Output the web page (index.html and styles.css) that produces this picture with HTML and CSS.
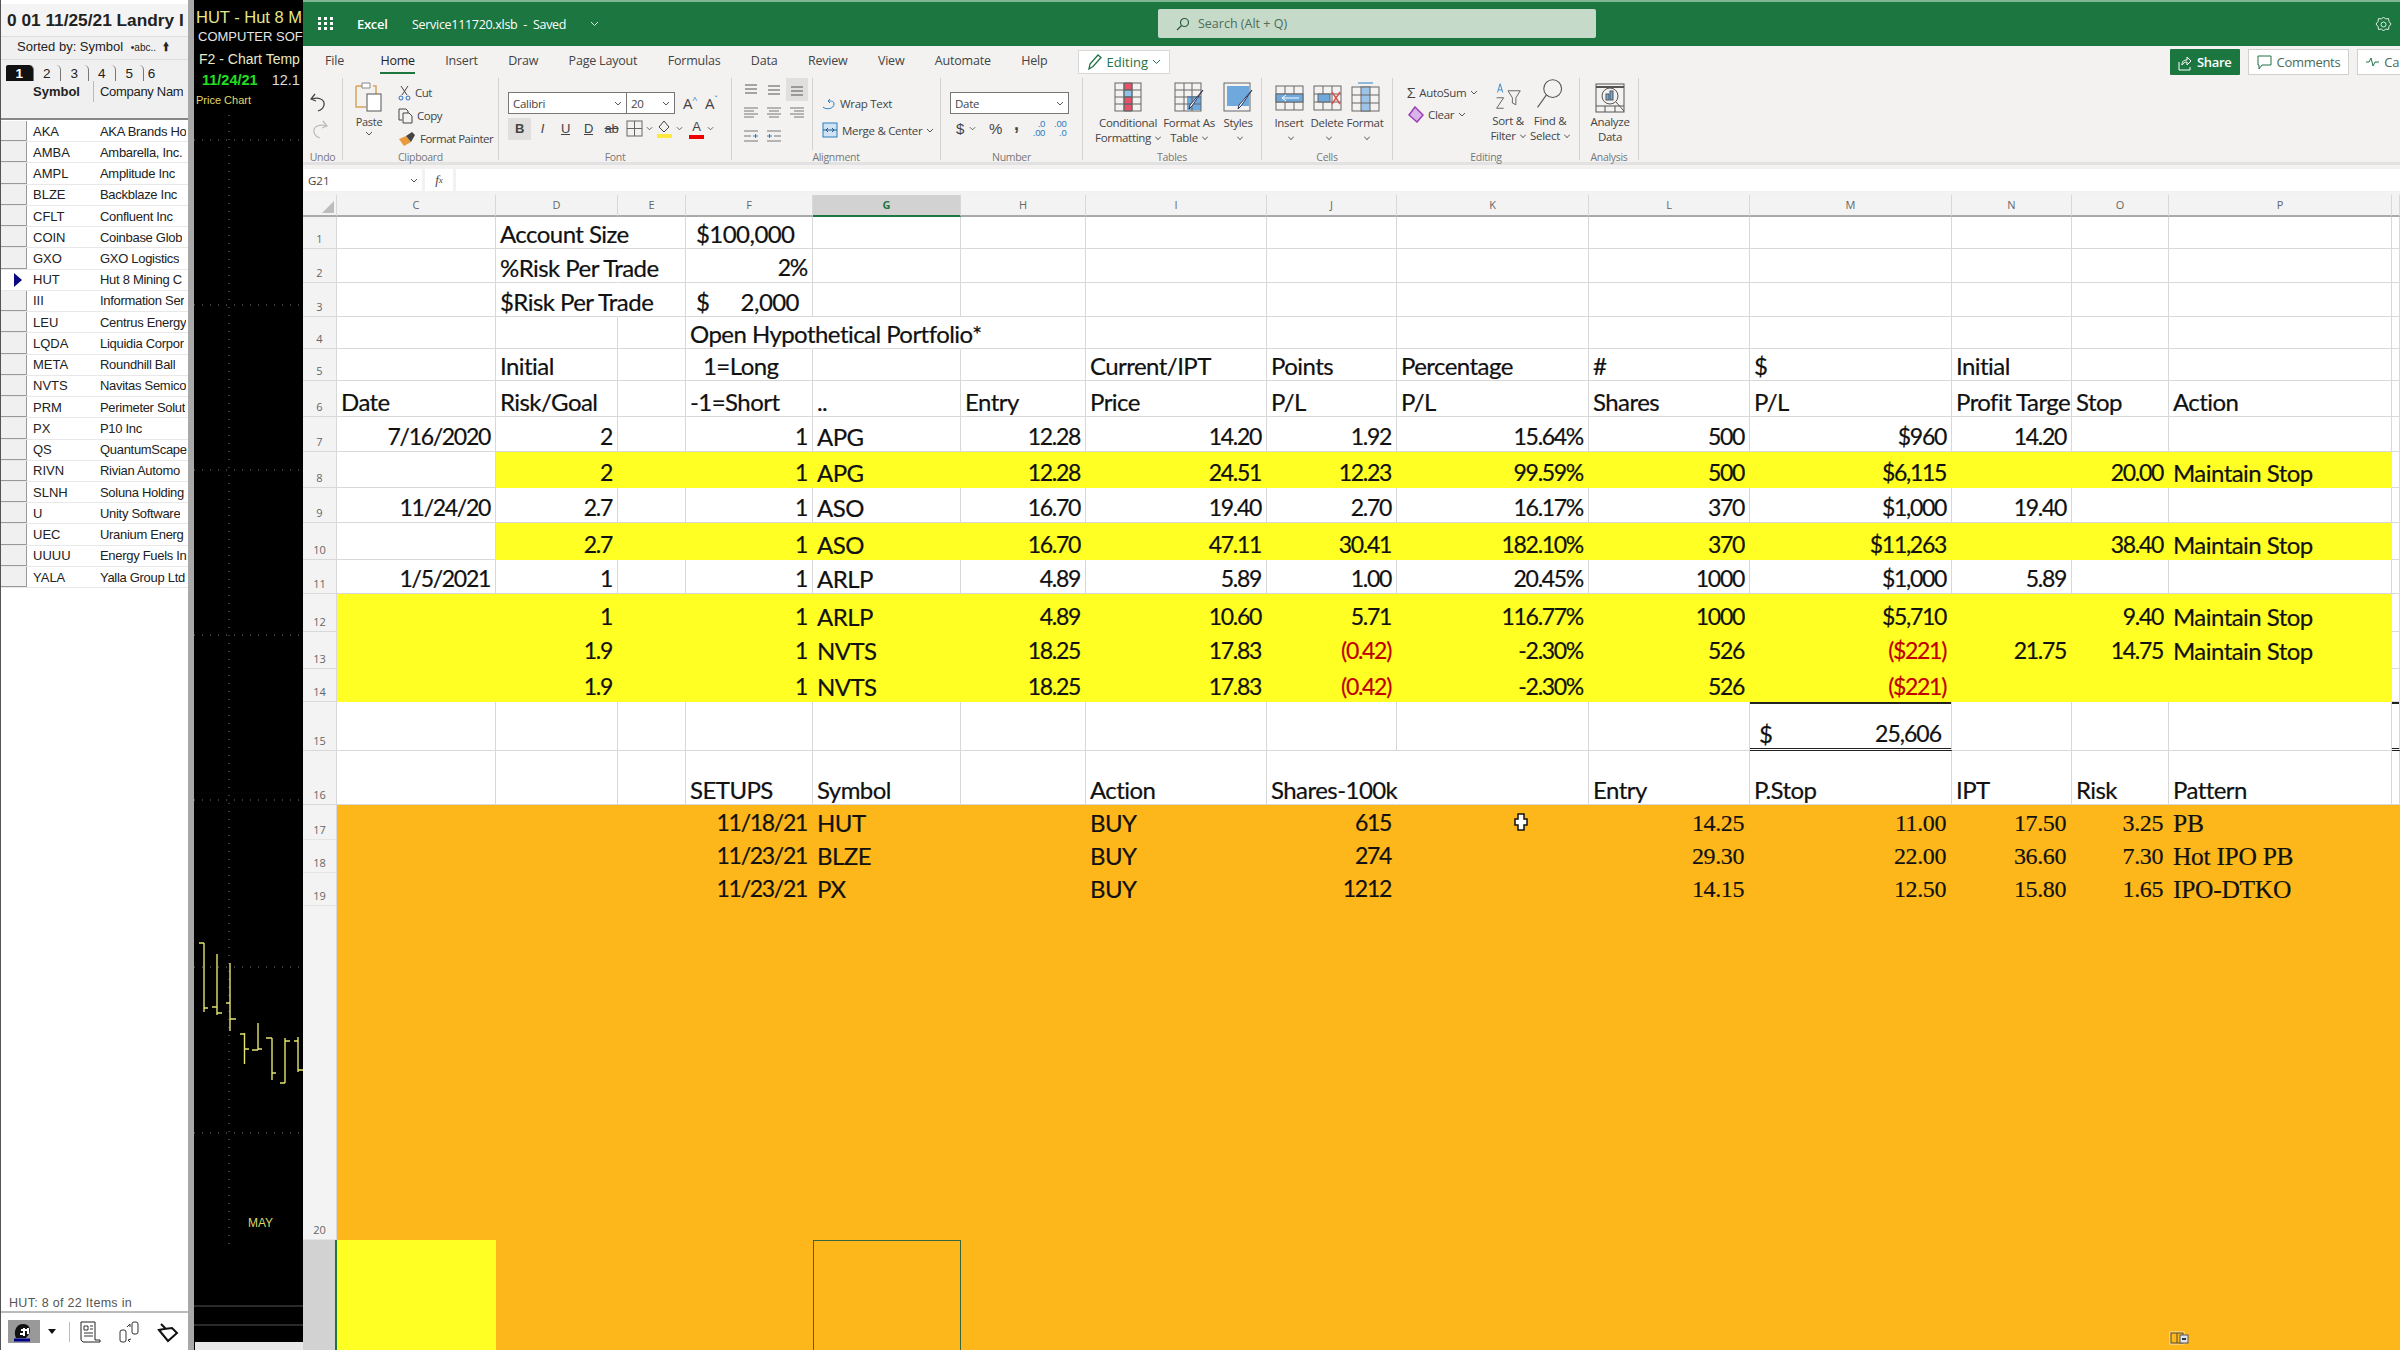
FILE: index.html
```html
<!DOCTYPE html>
<html lang="en">
<head>
  <meta charset="UTF-8">
  <title>Excel - Service111720.xlsb</title>
  <link rel="stylesheet" href="styles.css">
</head>
<body>

  <!-- Watch list -->
  <div class="watchlist">
    <div class="wl-title">0 01 11/25/21 Landry I</div>
    <div class="wl-sort">Sorted by: Symbol <small>&#8226;abc..</small> <b>&#129049;</b></div>
    <div class="wl-tabs">
      <span class="wl-tab active">1</span><span class="wl-tab">2</span><span class="wl-tab">3</span><span class="wl-tab">4</span><span class="wl-tab">5</span><span class="wl-tab last">6</span>
    </div>
    <div class="wl-head"><span class="wl-sym">Symbol</span><span class="wl-name">Company Nam</span></div>
    <div class="wl-band"></div>
    <div class="wl-rows">
      <div class="wl-row"><i></i><span class="wl-sym">AKA</span><span class="wl-name">AKA Brands Ho</span></div>
      <div class="wl-row"><i></i><span class="wl-sym">AMBA</span><span class="wl-name">Ambarella, Inc.</span></div>
      <div class="wl-row"><i></i><span class="wl-sym">AMPL</span><span class="wl-name">Amplitude Inc</span></div>
      <div class="wl-row"><i></i><span class="wl-sym">BLZE</span><span class="wl-name">Backblaze Inc</span></div>
      <div class="wl-row"><i></i><span class="wl-sym">CFLT</span><span class="wl-name">Confluent Inc</span></div>
      <div class="wl-row"><i></i><span class="wl-sym">COIN</span><span class="wl-name">Coinbase Glob</span></div>
      <div class="wl-row"><i></i><span class="wl-sym">GXO</span><span class="wl-name">GXO Logistics</span></div>
      <div class="wl-row current"><i></i><span class="wl-sym">HUT</span><span class="wl-name">Hut 8 Mining C</span></div>
      <div class="wl-row"><i></i><span class="wl-sym">III</span><span class="wl-name">Information Ser</span></div>
      <div class="wl-row"><i></i><span class="wl-sym">LEU</span><span class="wl-name">Centrus Energy</span></div>
      <div class="wl-row"><i></i><span class="wl-sym">LQDA</span><span class="wl-name">Liquidia Corpor</span></div>
      <div class="wl-row"><i></i><span class="wl-sym">META</span><span class="wl-name">Roundhill Ball</span></div>
      <div class="wl-row"><i></i><span class="wl-sym">NVTS</span><span class="wl-name">Navitas Semico</span></div>
      <div class="wl-row"><i></i><span class="wl-sym">PRM</span><span class="wl-name">Perimeter Solut</span></div>
      <div class="wl-row"><i></i><span class="wl-sym">PX</span><span class="wl-name">P10 Inc</span></div>
      <div class="wl-row"><i></i><span class="wl-sym">QS</span><span class="wl-name">QuantumScape</span></div>
      <div class="wl-row"><i></i><span class="wl-sym">RIVN</span><span class="wl-name">Rivian Automo</span></div>
      <div class="wl-row"><i></i><span class="wl-sym">SLNH</span><span class="wl-name">Soluna Holding</span></div>
      <div class="wl-row"><i></i><span class="wl-sym">U</span><span class="wl-name">Unity Software</span></div>
      <div class="wl-row"><i></i><span class="wl-sym">UEC</span><span class="wl-name">Uranium Energ</span></div>
      <div class="wl-row"><i></i><span class="wl-sym">UUUU</span><span class="wl-name">Energy Fuels In</span></div>
      <div class="wl-row"><i></i><span class="wl-sym">YALA</span><span class="wl-name">Yalla Group Ltd</span></div>
    </div>
    <div class="wl-status">HUT: 8 of 22 Items in</div>
    <div class="wl-tools">
      <span class="tool-on"><svg width="30" height="22" viewBox="0 0 30 22"><path d="M8 18c-3-6 0-14 7-14s8 6 6 10l-3 4z" fill="#111"/><path d="M13 10h6M12 14h5M16 8v8M20 8v6" stroke="#fff" stroke-width="2"/><path d="M6 20h16" stroke="#00008b" stroke-width="3"/></svg></span>
      <svg width="10" height="6" viewBox="0 0 10 6"><path d="M1 0h8L5 5z" fill="#111"/></svg>
      <span class="tool-sep"></span>
      <svg width="22" height="22" viewBox="0 0 22 22" fill="none" stroke="#222"><path d="M2 1h14v18h5M2 1v18l2 2h17v-2"/><path d="M5 5h4v4H5zM11 5h3M11 8h3M5 12h9M5 15h9" stroke="#333"/></svg>
      <svg width="22" height="22" viewBox="0 0 22 22" fill="none" stroke="#333"><rect x="14" y="1" width="6" height="12" rx="2"/><rect x="2" y="9" width="6" height="12" rx="2"/><path d="M9 6l3-3M12 3v3M13 18l-3 1M10 19l2 2"/></svg>
      <svg width="22" height="22" viewBox="0 0 22 22" fill="none" stroke="#111" stroke-width="2"><path d="M2 9l9 11 9-8-5-5-8 1zM4 3l5 5"/></svg>
    </div>
  </div>

  <!-- Price chart -->
  <div class="chart">
    <svg class="chart-plot" width="109" height="1350" viewBox="194 0 109 1350">
      <g stroke="#777" stroke-width="1" stroke-dasharray="1 7" fill="none">
        <path d="M229 115V1250"/>
        <path d="M194 140H303M194 305H303M194 470H303M194 635H303M194 800H303M194 967H303M194 1133H303"/>
      </g>
      <g stroke="#e4e46c" stroke-width="1.4" fill="none">
        <path d="M204 943V1012M199 943H204M204 1008H208"/>
        <path d="M217 954V1015M212 1007H217M217 1013H222"/>
        <path d="M230 963V1031M226 1003H230M230 1019H236"/>
        <path d="M244.5 1033V1064M240 1034H244.5M244.5 1049H249"/>
        <path d="M258 1023V1050M252 1050H258M258 1049H262"/>
        <path d="M272 1038V1080M266 1038H272M272 1073H276"/>
        <path d="M285 1038V1083M280 1083H285M285 1041H290"/>
        <path d="M298 1037V1072M294 1041H298M298 1070H303"/>
      </g>
      <path d="M194 1306H303M194 1325H303" stroke="#555"/>
    </svg>
    <div class="chart-name">HUT - Hut 8 M</div>
    <div class="chart-sector">COMPUTER SOF</div>
    <div class="chart-template">F2 - Chart Temp</div>
    <div class="chart-date"><b>11/24/21</b><span>12.1</span></div>
    <div class="chart-label">Price Chart</div>
    <div class="chart-month">MAY</div>
    <div class="chart-scroll"></div>
  </div>

  <!-- Excel window -->
  <div class="excel">
    <div class="titlebar">
      <svg class="waffle" width="16" height="14" viewBox="0 0 16 14" fill="#fff"><rect x="0" y="0" width="3" height="3"/><rect x="6" y="0" width="3" height="3"/><rect x="12" y="0" width="3" height="3"/><rect x="0" y="5" width="3" height="3"/><rect x="6" y="5" width="3" height="3"/><rect x="12" y="5" width="3" height="3"/><rect x="0" y="10" width="3" height="3"/><rect x="6" y="10" width="3" height="3"/><rect x="12" y="10" width="3" height="3"/></svg>
      <span class="app-name">Excel</span>
      <span class="doc-name">Service111720.xlsb&nbsp; -&nbsp; Saved</span>
      <svg class="doc-chev" width="9" height="6" viewBox="0 0 9 6" fill="none" stroke="#dfeee4"><path d="M1 1l3.500 3.500L8 1"/></svg>
      <div class="search">
        <svg width="14" height="14" viewBox="0 0 14 14" fill="none" stroke="#2c5b3c" stroke-width="1.200"><circle cx="8.500" cy="5.500" r="4"/><path d="M5.500 8.500L1 13"/></svg>
        <span>Search (Alt + Q)</span>
      </div>
      <svg class="gear" width="17" height="18" viewBox="0 0 17 18" fill="none" stroke="#dfeee4"><path d="M8.500 1l2 2 3-.5.5 3 2 2.500-2 2.500-.5 3-3-.5-2 2-2-2-3 .5-.5-3-2-2.500 2-2.500.5-3 3 .5z"/><circle cx="8.500" cy="8.500" r="2.500"/></svg>
    </div>

    <div class="tabbar">
      <span class="tab">File</span>
      <span class="tab active">Home</span>
      <span class="tab">Insert</span>
      <span class="tab">Draw</span>
      <span class="tab">Page Layout</span>
      <span class="tab">Formulas</span>
      <span class="tab">Data</span>
      <span class="tab">Review</span>
      <span class="tab">View</span>
      <span class="tab">Automate</span>
      <span class="tab">Help</span>
      <span class="mode">
        <svg width="16" height="18" viewBox="0 0 16 18" fill="none" stroke="#217346" stroke-width="1.300"><path d="M2 16l1-5 8-9 3 2.500-8 9z"/></svg>
        Editing
        <svg width="9" height="6" viewBox="0 0 9 6" fill="none" stroke="#217346"><path d="M1 1l3.500 3.500L8 1"/></svg>
      </span>
      <span class="tab-actions">
        <span class="btn-share">
          <svg width="14" height="17" viewBox="0 0 14 17" fill="none" stroke="#fff"><path d="M1 8v8h11v-3M4 11c0-4 2-5 5-5V3l4 4-4 4V8c-2 0-4 1-5 3z"/></svg>
          Share
        </span>
        <span class="btn-light">
          <svg width="15" height="15" viewBox="0 0 15 15" fill="none" stroke="#217346"><path d="M1 1h13v9H5l-3 4v-4H1z"/></svg>
          Comments
        </span>
        <span class="btn-light">
          <svg width="13" height="10" viewBox="0 0 13 10" fill="none" stroke="#217346"><path d="M0 5h3l2-4 2 8 2-4h4"/></svg>
          Ca
        </span>
      </span>
    </div>

    <div class="ribbon">
      <div class="group g-undo">
        <div class="stack">
          <svg width="18" height="20" viewBox="0 0 18 20" fill="none" stroke="#444" stroke-width="1.300"><path d="M5 1L1 6l5 2M2 6c6-2 13 0 12 6-.5 3-3 5-6 6"/></svg>
          <svg width="18" height="20" viewBox="0 0 18 20" fill="none" stroke="#bbb" stroke-width="1.300"><path d="M13 1l4 5-5 2M16 6c-6-2-13 0-12 6 .5 3 3 5 6 6"/></svg>
        </div>
        <label>Undo</label>
      </div>

      <div class="group g-clip">
        <div class="clip-row">
          <div class="paste">
            <svg width="28" height="30" viewBox="0 0 28 30" fill="none"><path d="M1 4h7M18 4h3v8M1 4v21h10" stroke="#d8a35c" stroke-width="1.500"/><path d="M7 1h8v5H7z" stroke="#888" fill="#fff"/><rect x="12" y="12" width="14" height="17" stroke="#555" fill="#fff"/></svg>
            <span>Paste</span>
            <svg width="8" height="5" viewBox="0 0 8 5" fill="none" stroke="#555"><path d="M1 1l3 3 3-3"/></svg>
          </div>
          <div class="clip-list">
            <span><svg width="13" height="16" viewBox="0 0 13 16" fill="none" stroke="#444"><path d="M3 1l6 9M10 1L4 10"/><circle cx="3" cy="13" r="2" stroke="#2a6ebb"/><circle cx="10" cy="13" r="2" stroke="#2a6ebb"/></svg>Cut</span>
            <span><svg width="15" height="16" viewBox="0 0 15 16" fill="none" stroke="#444"><path d="M1 1h7l2 2v2M1 1v11h3"/><path d="M5 5h6l3 3v7H5z"/></svg>Copy</span>
            <span><svg width="18" height="16" viewBox="0 0 18 16"><path d="M1 8l7-3 5 6-7 4z" fill="#e89a3c"/><path d="M8 5l6-4 3 3-4 7z" fill="#444"/></svg>Format Painter</span>
          </div>
        </div>
        <label>Clipboard</label>
      </div>

      <div class="group g-font">
        <div class="font-rows">
          <div class="font-top">
            <span class="select sel-font">Calibri<svg width="8" height="5" viewBox="0 0 8 5" fill="none" stroke="#555"><path d="M1 1l3 3 3-3"/></svg></span><span class="select sel-size">20<svg width="8" height="5" viewBox="0 0 8 5" fill="none" stroke="#555"><path d="M1 1l3 3 3-3"/></svg></span>
            <span class="grow">A<sup>^</sup></span>
            <span class="shrink">A<sup>&#711;</sup></span>
          </div>
          <div class="font-bottom">
            <span class="fbtn on"><b>B</b></span>
            <span class="fbtn"><em>I</em></span>
            <span class="fbtn"><u>U</u></span>
            <span class="fbtn"><u>D</u></span>
            <span class="fbtn"><s>ab</s></span>
            <svg width="17" height="17" viewBox="0 0 17 17" fill="none" stroke="#666"><rect x="1" y="1" width="15" height="15"/><path d="M8.500 1v15M1 8.500h15"/></svg>
            <svg class="mini" width="7" height="5" viewBox="0 0 8 5" fill="none" stroke="#555"><path d="M1 1l3 3 3-3"/></svg>
            <svg width="17" height="20" viewBox="0 0 17 20"><path d="M8 2l5 6-5 5-5-5z" fill="none" stroke="#444"/><rect x="1" y="15" width="15" height="4" fill="#ffe93a"/></svg>
            <svg class="mini" width="7" height="5" viewBox="0 0 8 5" fill="none" stroke="#555"><path d="M1 1l3 3 3-3"/></svg>
            <span class="fcolor">A</span>
            <svg class="mini" width="7" height="5" viewBox="0 0 8 5" fill="none" stroke="#555"><path d="M1 1l3 3 3-3"/></svg>
          </div>
        </div>
        <label>Font</label>
      </div>

      <div class="group g-align">
        <div class="align-wrap">
          <div class="align-icons">
            <svg width="14" height="12" viewBox="0 0 14 12" stroke="#555"><path d="M1 1h12M1 5h12M1 9h12"/></svg>
            <svg width="14" height="12" viewBox="0 0 14 12" stroke="#555"><path d="M1 2h12M1 6h12M1 10h12"/></svg>
            <span class="align-on"><svg width="14" height="12" viewBox="0 0 14 12" stroke="#555"><path d="M1 3h12M1 7h12M1 11h12"/></svg></span>
            <svg width="14" height="12" viewBox="0 0 14 12" stroke="#777"><path d="M0 1h14M0 4h10M0 7h14M0 10h10"/></svg>
            <svg width="14" height="12" viewBox="0 0 14 12" stroke="#777"><path d="M0 1h14M2 4h10M0 7h14M2 10h10"/></svg>
            <svg width="14" height="12" viewBox="0 0 14 12" stroke="#777"><path d="M0 1h14M4 4h10M0 7h14M4 10h10"/></svg>
            <svg width="14" height="12" viewBox="0 0 14 12" stroke="#777"><path d="M0 1h14M0 6h7M0 11h14"/><path d="M9 6h5M11.500 4v4" stroke="#2a7ec0"/></svg>
            <svg width="14" height="12" viewBox="0 0 14 12" stroke="#777"><path d="M0 1h14M7 6h7M0 11h14"/><path d="M0 6h5M2.500 4v4" stroke="#2a7ec0"/></svg>
          </div>
          <div class="align-text">
            <span><svg width="14" height="16" viewBox="0 0 14 16" fill="none" stroke="#2a7ec0"><path d="M1 12c3 3 11 2 11-3 0-3-3-3-5-3M8 4L6 6l2 2"/></svg>Wrap Text</span>
            <span><svg width="16" height="16" viewBox="0 0 16 16" fill="#cfe3f4" stroke="#2a7ec0"><rect x="1" y="1" width="14" height="14"/><path d="M1 8h14M4 8l2-2M4 8l2 2M12 8l-2-2M12 8l-2 2" stroke="#205a8e"/></svg>Merge &amp; Center<svg class="mini" width="8" height="5" viewBox="0 0 8 5" fill="none" stroke="#555"><path d="M1 1l3 3 3-3"/></svg></span>
          </div>
        </div>
        <label>Alignment</label>
      </div>

      <div class="group g-num">
        <div class="num-rows">
          <span class="select sel-num">Date<svg width="8" height="5" viewBox="0 0 8 5" fill="none" stroke="#555"><path d="M1 1l3 3 3-3"/></svg></span>
          <div class="num-btns">
            <span class="dollar">$</span>
            <svg width="7" height="5" viewBox="0 0 8 5" fill="none" stroke="#555"><path d="M1 1l3 3 3-3"/></svg>
            <span class="pct">%</span>
            <span class="comma">,</span>
            <span class="dec">.0<br>.00</span>
            <span class="dec">.00<br>.0</span>
          </div>
        </div>
        <label>Number</label>
      </div>

      <div class="group g-tables">
        <div class="big-row">
          <div class="big w-cond">
            <svg width="28" height="30" viewBox="0 0 28 30" stroke="#666" fill="none"><path d="M10 1h8v7h-8zM10 22h8v7h-8z" fill="#e9506a"/><path d="M10 8h8v7h-8z" fill="#8cc3ea"/><path d="M10 15h8v7h-8z" fill="#e9506a"/><rect x="1" y="1" width="26" height="28"/><path d="M1 8h26M1 15h26M1 22h26M10 1v28M18 1v28"/></svg>
            <span>Conditional<br>Formatting<em></em></span>
          </div>
          <div class="big w-table">
            <svg width="30" height="30" viewBox="0 0 30 30" stroke="#666" fill="none"><rect x="13" y="14" width="14" height="14" fill="#6fa8dc" stroke="none"/><rect x="1" y="1" width="26" height="28"/><path d="M1 8h26M1 15h26M1 22h26M10 1v28M18 1v28"/><path d="M29 8L18 24l-3 3 1-4z" fill="#fff" stroke="#335"/></svg>
            <span>Format As<br>Table<em></em></span>
          </div>
          <div class="big w-styles">
            <svg width="30" height="30" viewBox="0 0 30 30" stroke="#666" fill="none"><rect x="4" y="4" width="22" height="20" fill="#6fa8dc" stroke="none"/><rect x="1" y="1" width="26" height="28"/><path d="M29 8L18 24l-3 3 1-4z" fill="#fff" stroke="#335"/></svg>
            <span>Styles<br><em></em></span>
          </div>
        </div>
        <label>Tables</label>
      </div>

      <div class="group g-cells">
        <div class="big-row">
          <div class="big w-cell">
            <svg width="29" height="30" viewBox="0 0 29 30" stroke="#666" fill="none"><rect x="1" y="4" width="27" height="24"/><path d="M10 4v24M19 4v24M1 12h27M1 20h27"/><rect x="1" y="12" width="27" height="8" fill="#6fa8dc"/><path d="M24 16H7M11 13l-4 3 4 3" stroke="#fff"/></svg>
            <span>Insert<br><em></em></span>
          </div>
          <div class="big w-cell">
            <svg width="29" height="30" viewBox="0 0 29 30" stroke="#666" fill="none"><rect x="1" y="4" width="27" height="24"/><path d="M10 4v24M19 4v24M1 12h27M1 20h27"/><rect x="5" y="12" width="12" height="8" fill="#6fa8dc"/><path d="M19 10l8 12M27 10l-8 12" stroke="#e0524f" stroke-width="1.500"/></svg>
            <span>Delete<br><em></em></span>
          </div>
          <div class="big w-cell">
            <svg width="29" height="30" viewBox="0 0 29 30" stroke="#666" fill="none"><path d="M7 1h15" stroke="#2a7ec0"/><rect x="1" y="5" width="27" height="24"/><rect x="10" y="5" width="9" height="24" fill="#9cc4e8"/><path d="M1 13h27M1 21h27"/></svg>
            <span>Format<br><em></em></span>
          </div>
        </div>
        <label>Cells</label>
      </div>

      <div class="group g-edit">
        <div class="edit-row">
          <div class="edit-list">
            <span><i class="sigma">&#931;</i>AutoSum<svg width="8" height="5" viewBox="0 0 8 5" fill="none" stroke="#555"><path d="M1 1l3 3 3-3"/></svg></span>
            <span><svg width="17" height="17" viewBox="0 0 17 17" fill="#d9b3ea" stroke="#9b3fb5" stroke-width="1.500"><path d="M8 1l8 8-6 7-8-7z"/></svg>Clear<svg width="8" height="5" viewBox="0 0 8 5" fill="none" stroke="#555"><path d="M1 1l3 3 3-3"/></svg></span>
          </div>
          <div class="big w-sort">
            <svg width="28" height="28" viewBox="0 0 30 32" fill="none" stroke="#555"><path d="M15 10h14l-5 8v8l-4-2v-6z"/><path d="M3 12L6 2l3 10M4 9h4" stroke="#2a7ec0"/><path d="M2 18h8l-8 12h8"/></svg>
            <span>Sort &amp;<br>Filter<em></em></span>
          </div>
          <div class="big w-find">
            <svg width="28" height="32" viewBox="0 0 30 36" fill="none" stroke="#555" stroke-width="1.200"><circle cx="18" cy="12" r="10"/><path d="M11 19L1 33"/></svg>
            <span>Find &amp;<br>Select<em></em></span>
          </div>
        </div>
        <label>Editing</label>
      </div>

      <div class="group g-analysis">
        <div class="big-row">
          <div class="big w-an">
            <svg width="30" height="30" viewBox="0 0 30 30" fill="none" stroke="#555"><rect x="1" y="1" width="28" height="28"/><path d="M1 4h28" stroke-width="2"/><path d="M1 23h28M10 23v6M20 23v6"/><circle cx="15" cy="13" r="8"/><rect x="11" y="11" width="3" height="6" fill="#6fa8dc"/><rect x="15" y="8" width="3" height="9" fill="#6fa8dc"/><path d="M21 19l8 9"/></svg>
            <span>Analyze<br>Data</span>
          </div>
        </div>
        <label>Analysis</label>
      </div>
    </div>

    <div class="formula">
      <span class="namebox">G21<svg width="8" height="5" viewBox="0 0 8 5" fill="none" stroke="#555"><path d="M1 1l3 3 3-3"/></svg></span>
      <span class="fx">f<sub>x</sub></span>
      <span class="fx-input"></span>
    </div>

    <!-- Worksheet -->
    <div class="sheet">
      <table>
        <colgroup>
          <col class="c-hdr"><col class="c-c"><col class="c-d"><col class="c-e"><col class="c-f"><col class="c-g"><col class="c-h"><col class="c-i"><col class="c-j"><col class="c-k"><col class="c-l"><col class="c-m"><col class="c-n"><col class="c-o"><col class="c-p"><col class="c-q">
        </colgroup>
        <tr class="cols">
          <th class="corner"><span></span></th><th>C</th><th>D</th><th>E</th><th>F</th><th class="sel">G</th><th>H</th><th>I</th><th>J</th><th>K</th><th>L</th><th>M</th><th>N</th><th>O</th><th>P</th><th></th>
        </tr>
        <tr class="h1"><th>1</th><td></td><td class="join">Account Size</td><td></td><td class="ind">$100,000</td><td></td><td></td><td></td><td></td><td></td><td></td><td></td><td></td><td></td><td></td><td></td></tr>
        <tr class="h2"><th>2</th><td></td><td class="join">%Risk Per Trade</td><td></td><td class="r">2%</td><td></td><td></td><td></td><td></td><td></td><td></td><td></td><td></td><td></td><td></td><td></td></tr>
        <tr class="h3"><th>3</th><td></td><td class="join">$Risk Per Trade</td><td></td><td class="ind"><span class="acct acct-f"><span>$</span><span>2,000</span></span></td><td></td><td></td><td></td><td></td><td></td><td></td><td></td><td></td><td></td><td></td><td></td></tr>
        <tr class="h4"><th>4</th><td></td><td></td><td></td><td class="join">Open Hypothetical Portfolio*</td><td class="join"></td><td></td><td></td><td></td><td></td><td></td><td></td><td></td><td></td><td></td><td></td></tr>
        <tr class="h5 head"><th>5</th><td></td><td>Initial</td><td></td><td class="ind2">1=Long</td><td></td><td></td><td>Current/IPT</td><td>Points</td><td>Percentage</td><td>#</td><td>$</td><td>Initial</td><td></td><td></td><td></td></tr>
        <tr class="h6 head"><th>6</th><td>Date</td><td>Risk/Goal</td><td></td><td>-1=Short</td><td>..</td><td>Entry</td><td>Price</td><td>P/L</td><td>P/L</td><td>Shares</td><td>P/L</td><td class="clip">Profit Targe</td><td>Stop</td><td>Action</td><td></td></tr>
        <tr class="h7"><th>7</th><td class="r">7/16/2020</td><td class="r">2</td><td></td><td class="r">1</td><td>APG</td><td class="r">12.28</td><td class="r">14.20</td><td class="r">1.92</td><td class="r">15.64%</td><td class="r">500</td><td class="r">$960</td><td class="r">14.20</td><td></td><td></td><td></td></tr>
        <tr class="h8 hl"><th>8</th><td class="plain"></td><td class="r">2</td><td></td><td class="r">1</td><td>APG</td><td class="r">12.28</td><td class="r">24.51</td><td class="r">12.23</td><td class="r">99.59%</td><td class="r">500</td><td class="r">$6,115</td><td></td><td class="r">20.00</td><td>Maintain Stop</td><td class="plain"></td></tr>
        <tr class="h9"><th>9</th><td class="r">11/24/20</td><td class="r">2.7</td><td></td><td class="r">1</td><td>ASO</td><td class="r">16.70</td><td class="r">19.40</td><td class="r">2.70</td><td class="r">16.17%</td><td class="r">370</td><td class="r">$1,000</td><td class="r">19.40</td><td></td><td></td><td></td></tr>
        <tr class="h10 hl"><th>10</th><td class="plain"></td><td class="r">2.7</td><td></td><td class="r">1</td><td>ASO</td><td class="r">16.70</td><td class="r">47.11</td><td class="r">30.41</td><td class="r">182.10%</td><td class="r">370</td><td class="r">$11,263</td><td></td><td class="r">38.40</td><td>Maintain Stop</td><td class="plain"></td></tr>
        <tr class="h11"><th>11</th><td class="r">1/5/2021</td><td class="r">1</td><td></td><td class="r">1</td><td>ARLP</td><td class="r">4.89</td><td class="r">5.89</td><td class="r">1.00</td><td class="r">20.45%</td><td class="r">1000</td><td class="r">$1,000</td><td class="r">5.89</td><td></td><td></td><td></td></tr>
        <tr class="h12 hl"><th>12</th><td></td><td class="r">1</td><td></td><td class="r">1</td><td>ARLP</td><td class="r">4.89</td><td class="r">10.60</td><td class="r">5.71</td><td class="r">116.77%</td><td class="r">1000</td><td class="r">$5,710</td><td></td><td class="r">9.40</td><td>Maintain Stop</td><td class="plain"></td></tr>
        <tr class="h13 hl"><th>13</th><td></td><td class="r">1.9</td><td></td><td class="r">1</td><td>NVTS</td><td class="r">18.25</td><td class="r">17.83</td><td class="r neg">(0.42)</td><td class="r">-2.30%</td><td class="r">526</td><td class="r neg">($221)</td><td class="r">21.75</td><td class="r">14.75</td><td>Maintain Stop</td><td class="plain"></td></tr>
        <tr class="h14 hl"><th>14</th><td></td><td class="r">1.9</td><td></td><td class="r">1</td><td>NVTS</td><td class="r">18.25</td><td class="r">17.83</td><td class="r neg">(0.42)</td><td class="r">-2.30%</td><td class="r">526</td><td class="r neg">($221)</td><td></td><td></td><td></td><td class="plain"></td></tr>
        <tr class="h15"><th>15</th><td></td><td></td><td></td><td></td><td></td><td></td><td></td><td></td><td></td><td></td><td class="total"><span class="acct acct-m"><span>$</span><span class="amount">25,606</span></span></td><td></td><td></td><td></td><td class="q-total"></td></tr>
        <tr class="h16 head"><th>16</th><td></td><td></td><td></td><td>SETUPS</td><td>Symbol</td><td></td><td>Action</td><td class="join">Shares-100k</td><td></td><td>Entry</td><td>P.Stop</td><td>IPT</td><td>Risk</td><td>Pattern</td><td></td></tr>
        <tr class="h17 setup"><th>17</th><td></td><td></td><td></td><td class="r">11/18/21</td><td>HUT</td><td></td><td>BUY</td><td class="r">615</td><td></td><td class="r ser">14.25</td><td class="r ser">11.00</td><td class="r ser">17.50</td><td class="r ser">3.25</td><td class="ser">PB</td><td></td></tr>
        <tr class="h18 setup"><th>18</th><td></td><td></td><td></td><td class="r">11/23/21</td><td>BLZE</td><td></td><td>BUY</td><td class="r">274</td><td></td><td class="r ser">29.30</td><td class="r ser">22.00</td><td class="r ser">36.60</td><td class="r ser">7.30</td><td class="ser">Hot IPO PB</td><td></td></tr>
        <tr class="h19 setup"><th>19</th><td></td><td></td><td></td><td class="r">11/23/21</td><td>PX</td><td></td><td>BUY</td><td class="r">1212</td><td></td><td class="r ser">14.15</td><td class="r ser">12.50</td><td class="r ser">15.80</td><td class="r ser">1.65</td><td class="ser">IPO-DTKO</td><td></td></tr>
        <tr class="h20 setup"><th>20</th><td></td><td></td><td></td><td></td><td></td><td></td><td></td><td></td><td></td><td></td><td></td><td></td><td></td><td></td><td></td></tr>
        <tr class="h21 setup"><th class="sel-row"></th><td class="yellow"></td><td></td><td></td><td></td><td class="active-cell"></td><td></td><td></td><td></td><td></td><td></td><td></td><td></td><td></td><td></td><td></td></tr>
      </table>
      <!-- mouse pointer and quick analysis tag sit over the cells -->
      <svg class="pointer" width="14" height="18" viewBox="0 0 14 18"><path d="M4 1h6v5h3v6h-3v5H4v-5H1V6h3z" fill="#fff" stroke="#111" stroke-width="1.500"/></svg>
      <svg class="qa" width="20" height="14" viewBox="0 0 20 14"><rect x="1" y="1" width="14" height="12" fill="#fdb71b" stroke="#fbe7c0" stroke-width="1"/><rect x="2" y="2" width="12" height="10" fill="none" stroke="#5a4a2a"/><path d="M8 2v10" stroke="#5a4a2a"/><rect x="11" y="4" width="8" height="8" fill="#dfe3ee" stroke="#555"/><rect x="13" y="7" width="4" height="2" fill="#334"/></svg>
    </div>
  </div>

</body>
</html>
```

FILE: styles.css
```css
/* Basic styling */
html, body {
  margin: 0;
  padding: 0;
  height: 1350px;
  overflow: hidden;
}
body {
  display: flex;
  width: 2400px;
  background-color: #000;
  font-family: "Liberation Sans", Arial, sans-serif;
}

/* Watch list */
.watchlist {
  width: 188px;
  height: 1350px;
  flex: none;
  display: flex;
  flex-direction: column;
  box-sizing: border-box;
  padding-top: 4px;
  background-color: #fff;
  border-left: 1px solid #555;
  color: #222;
  overflow: hidden;
  white-space: nowrap;
}
.wl-title {
  height: 32px;
  line-height: 32px;
  padding-left: 6px;
  font-size: 17.300px;
  font-weight: bold;
  background-color: #f4f4f4;
}
.wl-sort {
  height: 22px;
  line-height: 20px;
  padding-left: 16px;
  font-size: 13px;
  background-color: #f0f0f0;
  border-top: 1px solid #ddd;
  border-bottom: 1px solid #ddd;
}
.wl-sort small {
  font-size: 10px;
  margin-left: 4px;
}
.wl-sort b {
  font-size: 12px;
  margin-left: 3px;
}
.wl-tabs {
  height: 21px;
  display: flex;
  align-items: flex-end;
  padding-left: 5px;
  background-color: #f0f0f0;
  font-size: 13.500px;
}
.wl-tab {
  width: 27.500px;
  height: 16px;
  line-height: 17px;
  text-align: center;
  box-sizing: border-box;
  border-right: 1px solid #777;
  border-radius: 0 5px 0 0;
}
.wl-tab.active {
  background-color: #111;
  color: #fff;
  font-weight: bold;
  border-radius: 2px 5px 0 0;
}
.wl-tab.last {
  width: 16px;
  border-right: none;
  overflow: hidden;
}
.wl-head {
  height: 21px;
  line-height: 21px;
  display: flex;
  background-color: #f0f0f0;
  font-size: 13px;
}
.wl-head .wl-sym {
  font-weight: bold;
  width: 67px;
  margin-left: 26px;
  padding-left: 6px;
  box-sizing: border-box;
  border-right: 1px solid #bbb;
}
.wl-head .wl-name {
  padding-left: 6px;
}
.wl-band {
  height: 16px;
  background-color: #f0f0f0;
  border-bottom: 2px solid #888;
}
.wl-rows {
  flex: 1;
  padding-top: 1px;
}
.wl-row {
  height: 21.240px;
  display: flex;
  align-items: center;
  box-sizing: border-box;
  font-size: 13px;
  border-bottom: 1px solid #e8e8e8;
}
.wl-row i {
  width: 26px;
  height: 100%;
  flex: none;
  box-sizing: border-box;
  background-color: #f0f0f0;
  border-right: 1px solid #999;
  border-bottom: 1px solid #999;
}
.wl-row.current i {
  position: relative;
  background-color: #fff;
  border-color: #fff;
}
.wl-row.current i::after {
  content: "";
  position: absolute;
  left: 13px;
  top: 3px;
  border-left: 8px solid #0a0a80;
  border-top: 7px solid transparent;
  border-bottom: 7px solid transparent;
}
.wl-sym {
  width: 73px;
  padding-left: 6px;
  box-sizing: border-box;
  flex: none;
}
.wl-name {
  overflow: hidden;
  letter-spacing: -0.300px;
}
.wl-status {
  height: 16px;
  line-height: 16px;
  padding-left: 8px;
  font-size: 12.500px;
  color: #555;
  letter-spacing: 0.300px;
  border-bottom: 2px solid #bbb;
}
.wl-tools {
  height: 37px;
  flex: none;
  display: flex;
  align-items: center;
  gap: 17px;
  padding-left: 7px;
}
.wl-tools .tool-on {
  width: 32px;
  height: 23px;
  margin-right: -10px;
  display: flex;
  background-color: #999;
}
.tool-sep {
  width: 1px;
  height: 20px;
  margin: 0 -8px 0 -5px;
  background-color: #bbb;
}

/* Price chart */
.chart {
  position: relative;
  width: 109px;
  height: 1350px;
  flex: none;
  margin-left: 6px;
  padding-top: 8px;
  box-sizing: border-box;
  background-color: #000;
  box-shadow: -6px 0 0 #a8a8a8, -4px 0 0 #a8a8a8;
  white-space: nowrap;
  overflow: hidden;
  color: #e8e8c8;
}
.chart-plot {
  position: absolute;
  left: 0;
  top: 0;
}
.chart-name,
.chart-sector,
.chart-template,
.chart-date,
.chart-label {
  position: relative;
  padding-left: 2px;
}
.chart-name {
  height: 18px;
  line-height: 18px;
  font-size: 16.500px;
  color: #e6e68c;
}
.chart-sector {
  height: 20px;
  line-height: 22px;
  padding-left: 4px;
  font-size: 13px;
  color: #e4e4e4;
}
.chart-template {
  height: 23px;
  line-height: 26px;
  padding-left: 5px;
  font-size: 14px;
}
.chart-date {
  height: 22px;
  line-height: 23px;
  padding-left: 8px;
  font-size: 14.500px;
  color: #ddd;
}
.chart-date b {
  color: #22e022;
  margin-right: 14px;
}
.chart-label {
  height: 18px;
  line-height: 18px;
  font-size: 11px;
  color: #e0d864;
}
.chart-month {
  position: absolute;
  left: 54px;
  top: 1216px;
  font-size: 12px;
  color: #d8d870;
}
.chart-scroll {
  position: absolute;
  left: 1px;
  right: 0;
  bottom: 0;
  height: 8px;
  background-color: #e8e8e8;
}

/* Excel window */
.excel {
  flex: 1;
  min-width: 0;
  height: 1350px;
  display: flex;
  flex-direction: column;
  background-color: #f3f2f1;
  font-family: "Open Sans", "Liberation Sans", sans-serif;
  color: #444;
}
.titlebar {
  position: relative;
  height: 44px;
  flex: none;
  display: flex;
  align-items: center;
  padding-left: 15px;
  background-color: #1b7640;
  border-top: 2px solid #7fb593;
  color: #fff;
  font-size: 13px;
}
.waffle {
  margin-right: 23px;
}
.app-name {
  font-weight: 600;
  width: 55px;
  letter-spacing: -0.300px;
}
.doc-name {
  font-size: 12.500px;
  width: 178px;
  letter-spacing: -0.300px;
}
.search {
  position: absolute;
  left: 855px;
  top: 7px;
  width: 438px;
  height: 29px;
  display: flex;
  align-items: center;
  gap: 8px;
  padding-left: 18px;
  box-sizing: border-box;
  border-radius: 2px;
  background-color: #c6dac9;
  color: #4c6d57;
  font-size: 12.500px;
}
.gear {
  position: absolute;
  right: 8px;
  top: 14px;
}

.tabbar {
  height: 32px;
  flex: none;
  display: flex;
  align-items: center;
  gap: 30.400px;
  padding-left: 22px;
  font-size: 12.500px;
  white-space: nowrap;
}
.tab {
  position: relative;
  margin-bottom: 4px;
  letter-spacing: -0.200px;
}
.tab:first-child {
  margin-right: 6px;
}
.tab.active {
  color: #222;
}
.tab.active::after {
  content: "";
  position: absolute;
  left: 0;
  right: 0;
  bottom: -5px;
  height: 2px;
  background-color: #1b7640;
}
.mode {
  width: 92px;
  height: 24px;
  display: flex;
  align-items: center;
  justify-content: center;
  gap: 4px;
  box-sizing: border-box;
  background-color: #fff;
  border: 1px solid #d8d8d8;
  color: #217346;
  font-size: 13px;
}
.tab-actions {
  margin-left: auto;
  display: flex;
  gap: 8px;
  width: 230px;
  flex: none;
  overflow: hidden;
}
.btn-share,
.btn-light {
  height: 26px;
  flex: none;
  display: flex;
  align-items: center;
  gap: 5px;
  padding: 0 8px;
  box-sizing: border-box;
  font-size: 13px;
  letter-spacing: -0.300px;
}
.btn-share {
  background-color: #1b7640;
  color: #fff;
  font-weight: 600;
  border-radius: 1px;
}
.btn-light {
  background-color: #fff;
  border: 1px solid #d0d0d0;
  color: #4a6a56;
}

/* Ribbon */
.ribbon {
  height: 87px;
  flex: none;
  display: flex;
  align-items: stretch;
  padding-bottom: 2px;
  box-sizing: border-box;
  border-bottom: 3px solid #e2e2e2;
  font-size: 11.500px;
  letter-spacing: -0.300px;
  white-space: nowrap;
}
.group {
  position: relative;
  flex: none;
  box-sizing: border-box;
  border-right: 1px solid #d2d2d2;
}
.group label {
  position: absolute;
  left: 0;
  right: 0;
  bottom: -4px;
  text-align: center;
  font-size: 10.500px;
  color: #777;
}
.g-undo { width: 40px; }
.g-clip { width: 156px; }
.g-font { width: 233px; }
.g-align { width: 209px; }
.g-num { width: 142px; }
.g-tables { width: 179px; }
.g-cells { width: 131px; }
.g-edit { width: 187px; }
.g-analysis { width: 59px; }

.stack {
  display: flex;
  flex-direction: column;
  gap: 7px;
  padding: 15px 0 0 7px;
}
.clip-row {
  display: flex;
  gap: 15px;
  padding: 4px 0 0 12px;
}
.paste {
  display: flex;
  flex-direction: column;
  align-items: center;
  gap: 2px;
  font-size: 11px;
}
.clip-list {
  display: flex;
  flex-direction: column;
  gap: 6px;
  margin-top: 2px;
}
.clip-list span {
  height: 17px;
  display: flex;
  align-items: center;
  gap: 4px;
  letter-spacing: -0.500px;
}

.font-rows {
  padding: 14px 0 0 9px;
}
.font-top {
  display: flex;
  align-items: center;
}
.select {
  height: 22px;
  display: flex;
  align-items: center;
  justify-content: space-between;
  padding: 0 4px;
  box-sizing: border-box;
  background-color: #fff;
  border: 1px solid #777;
  font-size: 11.500px;
}
.sel-font { width: 119px; }
.sel-size { width: 48px; border-left: none; }
.sel-num { width: 119px; }
.grow, .shrink {
  margin-left: 8px;
  font-size: 15px;
}
.grow sup, .shrink sup {
  font-size: 9px;
  color: #2a7ec0;
  line-height: 0;
}
.font-bottom {
  height: 23px;
  margin-top: 3px;
  display: flex;
  align-items: center;
  font-size: 13px;
  font-family: "Liberation Sans", sans-serif;
}
.fbtn {
  width: 23px;
  height: 22px;
  line-height: 22px;
  text-align: center;
}
.fbtn.on {
  background-color: #e1dfdd;
}
.font-bottom svg {
  margin-left: 3px;
}
.fcolor {
  width: 15px;
  margin-left: 6px;
  text-align: center;
  line-height: 16px;
  border-bottom: 4px solid #e00;
}

.align-wrap {
  display: flex;
}
.align-icons {
  width: 81px;
  height: 72px;
  flex: none;
  display: grid;
  grid-template-columns: repeat(3, 23px);
  grid-auto-rows: 23px;
  place-items: center;
  padding-left: 7px;
  box-sizing: border-box;
  border-right: 1px solid #d2d2d2;
}
.align-on {
  width: 22px;
  height: 23px;
  display: flex;
  align-items: center;
  justify-content: center;
  background-color: #e1dfdd;
}
.align-text {
  display: flex;
  flex-direction: column;
  gap: 9px;
  padding: 16px 0 0 9px;
}
.align-text span {
  display: flex;
  align-items: center;
  gap: 4px;
  height: 18px;
}

.num-rows {
  padding: 14px 0 0 9px;
}
.num-btns {
  height: 28px;
  display: flex;
  align-items: center;
  gap: 9px;
  font-family: "Liberation Sans", sans-serif;
}
.dollar { font-size: 15px; margin-left: 6px; margin-right: -4px; }
.pct { font-size: 15px; margin-left: 4px; }
.comma { font-size: 18px; font-weight: bold; margin: -8px 5px 0 3px; }
.dec {
  font-size: 9.500px;
  line-height: 9px;
  color: #2a7ec0;
  text-align: right;
}

.big-row {
  display: flex;
  padding: 4px 0 0 9px;
}
.big {
  display: flex;
  flex-direction: column;
  align-items: center;
  gap: 3px;
  line-height: 15px;
  text-align: center;
}
.big em {
  display: inline-block;
  width: 5px;
  height: 5px;
  margin: 0 0 2px 4px;
  border-right: 1px solid #555;
  border-bottom: 1px solid #555;
  transform: rotate(45deg) scale(.7);
}
.w-cond { width: 72px; }
.w-table { width: 52px; margin-right: 5px; margin-left: -1px; }
.w-styles { width: 36px; }
.w-cell { width: 38px; }
.g-cells .big-row { padding-left: 8px; }
.w-sort { width: 42px; }
.w-find { width: 42px; margin-top: -4px; margin-left: -6px; }
.w-an { width: 42px; margin-top: 1px; gap: 1px; }

.edit-row {
  display: flex;
  padding: 4px 0 0 14px;
  gap: 6px;
}
.edit-list {
  width: 74px;
  display: flex;
  flex-direction: column;
  gap: 2px;
}
.edit-list span {
  height: 20px;
  display: flex;
  align-items: center;
  gap: 4px;
}
.sigma {
  font-style: normal;
  font-size: 15px;
}

/* Formula bar */
.formula {
  height: 30px;
  flex: none;
  display: flex;
  gap: 3px;
  padding: 4px 0 4px 1px;
  box-sizing: border-box;
  font-size: 11.500px;
}
.namebox,
.fx,
.fx-input {
  background-color: #fff;
  display: flex;
  align-items: center;
}
.namebox {
  width: 118px;
  justify-content: space-between;
  padding: 0 4px;
  box-sizing: border-box;
}
.fx {
  width: 28px;
  justify-content: center;
  font-family: "Liberation Serif", serif;
  font-style: italic;
  font-size: 13px;
}
.fx sub {
  font-size: 9px;
}
.fx-input {
  flex: 1;
}

/* Worksheet */
.sheet {
  position: relative;
  flex: 1;
  min-height: 0;
  overflow: hidden;
  background-color: #fff;
}
table {
  table-layout: fixed;
  width: 2097px;
  border-collapse: separate;
  border-spacing: 0;
  font-family: "Lato", "Liberation Sans", sans-serif;
  font-size: 24px;
  letter-spacing: -0.550px;
  color: #111;
}
.c-hdr { width: 34px; }
.c-c { width: 159px; }
.c-d { width: 122px; }
.c-e { width: 68px; }
.c-f { width: 127px; }
.c-g { width: 148px; }
.c-h { width: 125px; }
.c-i { width: 181px; }
.c-j { width: 130px; }
.c-k { width: 192px; }
.c-l { width: 161px; }
.c-m { width: 202px; }
.c-n { width: 120px; }
.c-o { width: 97px; }
.c-p { width: 223px; }
.c-q { width: 8px; }

th {
  padding: 0;
  background-color: #f3f3f3;
  border-right: 1px solid #d8d8d8;
  border-bottom: 1px solid #d8d8d8;
  font-family: "Open Sans", "Liberation Sans", sans-serif;
  font-size: 11px;
  font-weight: normal;
  letter-spacing: 0;
  color: #666;
  vertical-align: bottom;
  line-height: 18px;
}
.cols th {
  height: 20px;
  vertical-align: middle;
  border-bottom: 2px solid #aaa;
}
.cols th.sel {
  background-color: #d2d2d2;
  border-bottom-color: #1b7640;
  color: #1b7640;
  font-weight: 700;
}
.corner {
  position: relative;
}
.corner span {
  position: absolute;
  right: 2px;
  bottom: 2px;
  border-left: 12px solid transparent;
  border-bottom: 12px solid #bdbdbd;
}
td {
  padding: 0 5px 0 4px;
  border-right: 1px solid #d8d8d8;
  border-bottom: 1px solid #d8d8d8;
  vertical-align: bottom;
  line-height: 29px;
  white-space: nowrap;
  overflow: hidden;
  -webkit-text-stroke: 0.200px #111;
}
td.join {
  overflow: visible;
  border-right-color: transparent;
}
td.clip {
  padding-right: 0;
}
.r {
  text-align: right;
  font-size: 23px;
  letter-spacing: -1.300px;
}
.ind { padding-left: 10px; }
.ind2 { padding-left: 17px; }
.neg {
  color: #c00000;
  -webkit-text-stroke: 0.200px #c00000;
}

.h1 > * { height: 31px; }
.h2 > * { height: 33px; }
.h3 > * { height: 33px; }
.h4 > * { height: 31px; }
.h5 > * { height: 31px; }
.h6 > * { height: 35px; }
.h7 > * { height: 34px; }
.h8 > * { height: 35px; }
.h9 > * { height: 34px; }
.h10 > * { height: 36px; }
.h11 > * { height: 33px; }
.h12 > * { height: 37px; }
.h13 > * { height: 33px; }
.h13 td { padding-bottom: 3px; }
.h14 > * { height: 32px; }
.h15 > * { height: 46px; }
.h16 > * { height: 53px; }
.h17 td { height: 32px; }
.h17 th { height: 34px; }
.h18 td { height: 30px; }
.h18 th { height: 32px; }
.h19 td { height: 30px; }
.h19 th { height: 32px; }
.h20 td { height: 331px; }
.h20 th { height: 333px; }
.h21 td { height: 110px; }
.h21 th { height: 112px; }

/* Highlighted rows */
.hl td {
  background-color: #ffff24;
  border-color: transparent;
}
.hl td.plain {
  background-color: #fff;
  border-right-color: #d8d8d8;
  border-bottom-color: #d8d8d8;
}
.setup td {
  padding-bottom: 2px;
  background-color: #fdb71b;
  border-color: transparent;
}
.setup th {
  border-bottom-color: #e4e4e4;
}
.setup .ser {
  font-family: "Liberation Serif", "Times New Roman", serif;
  font-size: 25.500px;
  letter-spacing: -0.300px;
  line-height: 27px;
}
.setup .r.ser {
  font-size: 24px;
  letter-spacing: -0.400px;
}
.h21 .sel-row {
  background-color: #d2d2d2;
  border-right: 2px solid #1b7640;
}
.h21 td.yellow {
  background-color: #ffff24;
}
.h21 td.active-cell {
  border: 1px solid #33683f;
  border-bottom: none;
  box-sizing: border-box;
}

/* Totals */
.total {
  position: relative;
  border-bottom: 3px double #222;
  box-shadow: inset 0 2px 0 #222;
}
.q-total {
  border-bottom: 3px double #222;
  box-shadow: inset 0 2px 0 #222;
}
.acct {
  display: flex;
  justify-content: space-between;
}
.acct-f {
  width: 103px;
}
.acct-m {
  padding: 0 5px;
}
.amount {
  font-size: 23px;
  letter-spacing: -1px;
}

/* Things on top of the cells */
.pointer {
  position: absolute;
  left: 1211px;
  top: 618px;
}
.qa {
  position: absolute;
  left: 1866px;
  top: 1136px;
}
```
